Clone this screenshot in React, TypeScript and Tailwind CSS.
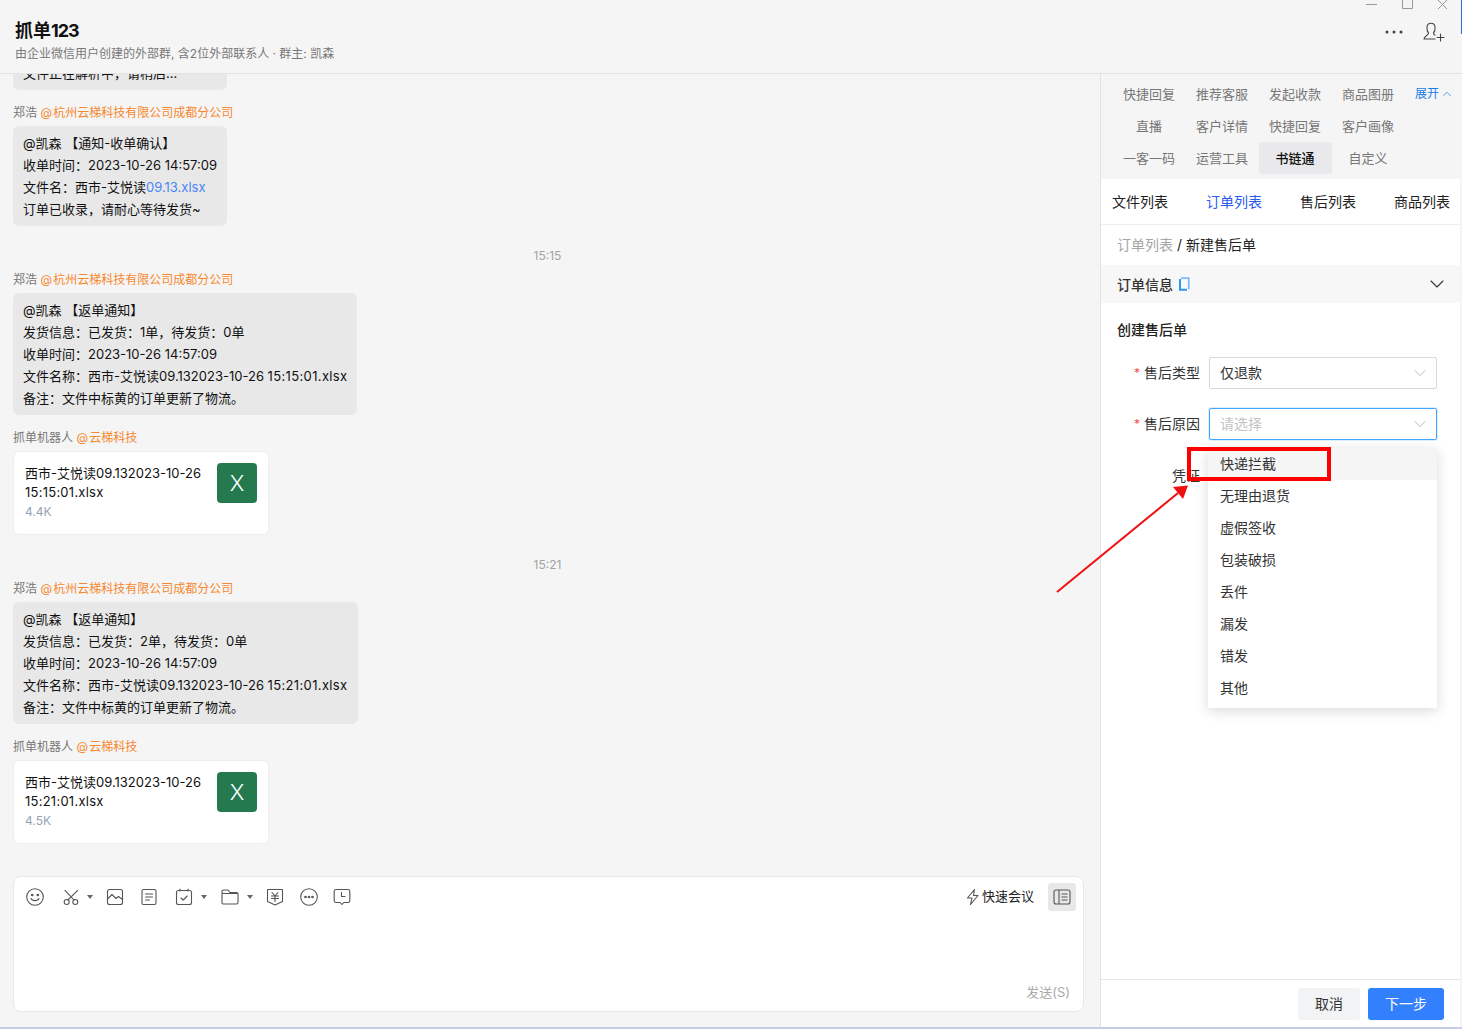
import React from 'react';
import { ChevronDown, ChevronUp } from 'lucide-react';

const tabs = [
  ['快捷回复', '推荐客服', '发起收款', '商品图册'],
  ['直播', '客户详情', '快捷回复', '客户画像'],
  ['一客一码', '运营工具', '书链通', '自定义'],
];
const reasons = ['快递拦截', '无理由退货', '虚假签收', '包装破损', '丢件', '漏发', '错发', '其他'];

function Sender({ name, org }: { name: string; org: string }) {
  return (
    <div className="h-[18px] pt-[1px] text-[12px] leading-[18px] text-[#777]">
      {name} <span className="text-[#f5882f]"><span className="mr-[-2px]">@</span> {org}</span>
    </div>
  );
}

function Bubble({ lines, className = 'w-fit' }: { lines: React.ReactNode[]; className?: string }) {
  return (
    <div className={`rounded-md bg-[#e8e8e8] px-[10px] py-[6px] text-[13px] leading-[22px] text-[#111] ${className}`}>
      {lines.map((l, i) => (
        <div key={i} className="whitespace-nowrap">{l}</div>
      ))}
    </div>
  );
}

function FileCard({ time, size }: { time: string; size: string }) {
  return (
    <div className="mt-[5px] flex h-[84px] w-[256px] justify-between rounded-md border border-[#eeeeee] bg-white pl-[11px] pr-[11px] pt-[11px]">
      <div className="w-[186px] pt-[1px] text-[13px] leading-[19px] text-[#111]">
        <div>西市-艾悦读09.132023-10-26</div>
        <div className="tracking-[0.25px]">{time}.xlsx</div>
        <div className="text-[12px] text-[#94a3b3]">{size}</div>
      </div>
      <div className="flex h-[40px] w-[40px] items-center justify-center rounded-sm bg-[#24794f] text-[22px] font-light text-white">X</div>
    </div>
  );
}

function Time({ t }: { t: string }) {
  return <div className="mb-[6px] mt-[20px] h-[18px] pr-[2px] pt-[1px] text-center text-[12px] leading-[18px] text-[#a3a3a3]">{t}</div>;
}

function Receipt({ sent, time }: { sent: string; time: string }) {
  return (
    <Bubble
      className="mt-[5px] w-fit"
      lines={[
        '@凯森 【返单通知】',
        `发货信息：已发货：${sent}单，待发货：0单`,
        '收单时间：2023-10-26 14:57:09',
        <>文件名称：西市-艾悦读09.132023-10-26 <span className="tracking-[0.35px]">{time}.xlsx</span></>,
        '备注：文件中标黄的订单更新了物流。',
      ]}
    />
  );
}

function Caret({ className = 'ml-[7px]' }: { className?: string }) {
  return <span className={`h-0 w-0 border-x-[3px] border-t-[4px] border-x-transparent border-t-[#666] ${className}`} />;
}

function Ico({ children, w = 20 }: { children: React.ReactNode; w?: number }) {
  return (
    <svg width={w} height={20} viewBox="0 0 20 20" fill="none" stroke="#555" strokeWidth="1.1" strokeLinecap="round" strokeLinejoin="round">
      {children}
    </svg>
  );
}

function Toolbar() {
  return (
    <div className="flex items-center">
      <div className="ml-[11px]">
        <Ico>
          <circle cx="10" cy="10" r="8.3" />
          <circle cx="7.2" cy="8" r=".8" fill="#555" />
          <circle cx="12.8" cy="8" r=".8" fill="#555" />
          <path d="M6 11.5c1 2.8 7 2.8 8 0" />
        </Ico>
      </div>
      <div className="ml-[16px] flex items-center">
        <Ico>
          <circle cx="5.7" cy="15" r="2.5" />
          <circle cx="14.3" cy="15" r="2.5" />
          <path d="M16.700 3.300 7 13M4 3.300 13 13" />
        </Ico>
        <Caret className="ml-[6px]" />
      </div>
      <div className="ml-[12px]">
        <Ico>
          <rect x="2.5" y="2.5" width="15" height="15" rx="2" />
          <path d="M2.5 12 7 7.5l4 4 2.5-2 4 3" />
        </Ico>
      </div>
      <div className="ml-[14px]">
        <Ico>
          <rect x="3" y="2.5" width="14" height="15" rx="1.5" />
          <path d="M6.5 7h7M6.5 10h7M6.5 13h4" />
        </Ico>
      </div>
      <div className="ml-[15px] flex items-center">
        <Ico>
          <rect x="2.5" y="3.5" width="15" height="14" rx="2" />
          <path d="M6 2v2M14 2v2M7 11l2.2 2 4-4" />
        </Ico>
        <Caret />
      </div>
      <div className="ml-[13px] flex items-center">
        <Ico>
          <path d="M2 6V4.5C2 3.7 2.7 3 3.5 3H8l2 2.5h6.5c.8 0 1.500.7 1.500 1.500v8.500c0 .8-.7 1.500-1.500 1.500h-13C2.700 17 2 16.300 2 15.500V6.500h16" />
        </Ico>
        <Caret />
      </div>
      <div className="ml-[12px]">
        <Ico>
          <path d="M3 2.500h14c.3 0 .5.2.5.5v11.500L10 18l-7.500-3.500V3c0-.3.2-.5.500-.5z" />
          <path d="M7 5.500 10 9l3-3.500M6.500 9h7M6.500 11.500h7M10 9v5.500" />
        </Ico>
      </div>
      <div className="ml-[14px]">
        <Ico>
          <circle cx="10" cy="10" r="8.300" />
          <circle cx="6.500" cy="10" r=".8" fill="#555" />
          <circle cx="10" cy="10" r=".8" fill="#555" />
          <circle cx="13.500" cy="10" r=".8" fill="#555" />
        </Ico>
      </div>
      <div className="ml-[13px]">
        <Ico>
          <path d="M4 2.500h12c1 0 1.800.8 1.800 1.800v9.400c0 1-.8 1.800-1.800 1.800h-4.200L10 17.500l-1.800-2H4c-1 0-1.800-.8-1.800-1.800V4.300c0-1 .8-1.800 1.800-1.800z" />
          <path d="M9.500 5.500V9.500h3.500" />
        </Ico>
      </div>
    </div>
  );
}

function Field({ label, value, focused }: { label: string; value: string; focused?: boolean }) {
  return (
    <div className="flex items-center">
      <div className="flex w-[83px] items-center justify-end pb-[1px] text-[14px] text-[#333]">
        <span className="mr-[4px] text-[12px] text-[#f5484d]">*</span>
        {label}
      </div>
      <div
        className={`ml-[9px] flex h-[32px] w-[228px] items-center justify-between rounded-[2px] border pb-[1px] pl-[10px] text-[14px] ${
          focused ? 'border-[#40a9ff] text-[#c4c4c4] shadow-[0_0_0_1px_rgba(24,144,255,0.15)]' : 'border-[#d9d9d9] text-[#333]'
        }`}
      >
        {value}
        <ChevronDown size={20} strokeWidth={0.8} className="mr-[6px] text-[#999]" />
      </div>
    </div>
  );
}

export default function App() {
  return (
    <div
      className="relative flex h-[1029px] w-[1462px] flex-col overflow-hidden bg-[#f5f5f5]"
      style={{ fontFamily: 'Inter, "Noto Sans CJK SC", sans-serif' }}
    >
      <div className="flex h-[74px] shrink-0 justify-between border-b border-[#e3e3e3] pl-[15px]">
        <div>
          <div className="mt-[19px] text-[18px] font-bold leading-[24px] text-[#111]">抓单<span className="tracking-[-1px]">123</span></div>
          <div className="mt-[2px] text-[12px] leading-[18px] text-[#777]">由企业微信用户创建的外部群, 含2位外部联系人 · 群主: 凯森</div>
        </div>
        <div className="flex w-[100px] flex-col">
          <svg width="86" height="10" viewBox="0 0 86 10" fill="none" stroke="#999" strokeWidth="1" className="mr-[14px] self-end">
            <path d="M4 4.500h11M40.500 0v8.500h10V0M76 0l9 9M85 0l-9 9" />
          </svg>
          <div className="mt-[12px] flex items-center justify-end gap-[20px] pr-[17px]">
            <svg width="18" height="4" viewBox="0 0 18 4" fill="#444">
              <circle cx="2" cy="2" r="1.500" />
              <circle cx="9" cy="2" r="1.500" />
              <circle cx="16" cy="2" r="1.500" />
            </svg>
            <svg width="22" height="20" viewBox="0 0 22 20" fill="none" stroke="#444" strokeWidth="1.100" strokeLinecap="round">
              <path d="M1 17h11M1 17c0-3 4.500-3.500 4.500-6C4 9.500 3.800 7 4 5c.3-2.400 2-3.700 4-3.700s3.700 1.300 4 3.700c.2 2 0 4.500-1.500 6 0 1 .6 1.700 1.500 2.200M14 15.500h7M17.500 12v7" />
            </svg>
          </div>
        </div>
      </div>

      <div className="flex min-h-0 flex-1">
        <div className="flex w-[1100px] flex-col">
          <div className="min-h-0 flex-1 overflow-hidden pl-[13px] pr-[16px]">
            <Bubble className="mt-[-18px] w-[214px]" lines={['文件正在解析中，请稍后...']} />
            <div className="mt-[13px]">
              <Sender name="郑浩" org="杭州云梯科技有限公司成都分公司" />
            </div>
            <Bubble
              className="mt-[5px] w-fit"
              lines={[
                '@凯森 【通知-收单确认】',
                '收单时间：2023-10-26 14:57:09',
                <>文件名：西市-艾悦读<span className="text-[#4a86f7]">09.13.xlsx</span></>,
                '订单已收录，请耐心等待发货~',
              ]}
            />
            <Time t="15:15" />
            <Sender name="郑浩" org="杭州云梯科技有限公司成都分公司" />
            <Receipt sent="1" time="15:15:01" />
            <div className="mt-[13px]">
              <Sender name="抓单机器人" org="云梯科技" />
            </div>
            <FileCard time="15:15:01" size="4.4K" />
            <Time t="15:21" />
            <Sender name="郑浩" org="杭州云梯科技有限公司成都分公司" />
            <Receipt sent="2" time="15:21:01" />
            <div className="mt-[13px]">
              <Sender name="抓单机器人" org="云梯科技" />
            </div>
            <FileCard time="15:21:01" size="4.5K" />
          </div>

          <div className="mb-[15px] ml-[13px] mr-[16px] flex h-[136px] shrink-0 flex-col justify-between rounded-lg border border-[#e8e8e8] bg-white pb-[10px] pr-[7px] pt-[6px]">
            <div className="flex items-center justify-between">
              <Toolbar />
              <div className="flex items-center">
                <svg width="16" height="18" viewBox="0 0 16 18" fill="none" stroke="#555" strokeWidth="1.100" strokeLinejoin="round">
                  <path d="M9.500 1.500 2.500 10H7l-1.500 6.500L13 7.500H8.500z" />
                </svg>
                <span className="ml-[1px] text-[13px] text-[#222]">快速会议</span>
                <div className="ml-[14px] flex h-[28px] w-[28px] items-center justify-center rounded-[3px] bg-[#e8e8e8]">
                  <svg width="18" height="16" viewBox="0 0 18 16" fill="none" stroke="#555" strokeWidth="1.100">
                    <rect x="1" y="1" width="16" height="14" rx="2" />
                    <path d="M6 1v14M8.500 5H14.500M8.500 8H14.500M8.500 11H14.500" />
                  </svg>
                </div>
              </div>
            </div>
            <div className="pr-[6px] text-right text-[13px] leading-[18px] text-[#aaa]">发送(S)</div>
          </div>
        </div>

        <div className="flex w-[360px] flex-col border-l border-[#e3e3e3] bg-white">
          <div className="h-[105px] shrink-0 bg-[#f5f5f5] pl-[12px] pt-[4px]">
            {tabs.map((row, r) => (
              <div key={r} className="flex">
                {row.map((t) => (
                  <div
                    key={t}
                    className={`flex h-[32px] w-[73px] items-center justify-center rounded-[3px] pr-[1px] pt-[1px] text-[13px] ${
                      t === '书链通' ? 'bg-[#e9e9eb] font-medium text-[#111]' : 'text-[#777]'
                    }`}
                  >
                    {t}
                  </div>
                ))}
                {r === 0 && (
                  <div className="ml-[10px] flex items-center text-[12px] text-[#1a7ee8]">
                    展开
                    <ChevronUp size={14} strokeWidth={1.200} className="ml-[1px]" />
                  </div>
                )}
              </div>
            ))}
          </div>
          <div className="flex h-[46px] shrink-0 items-center justify-between border-b border-[#eeeeee] pl-[11px] pr-[10px] text-[14px] text-[#222]">
            <span>文件列表</span>
            <span className="text-[#2a5bf0]">订单列表</span>
            <span>售后列表</span>
            <span>商品列表</span>
          </div>
          <div className="flex h-[40px] shrink-0 items-center rounded-b-md pb-[1px] pl-[16px] text-[14px] text-[#222]">
            <span className="text-[#a6a6a6]">订单列表</span>&nbsp;/ 新建售后单
          </div>
          <div className="flex h-[38px] shrink-0 items-center justify-between bg-[#f7f7f7] pl-[16px] pr-[11px] text-[14px] font-medium text-[#333]">
            <div className="flex items-center">
              订单信息
              <svg width="12" height="14" viewBox="0 0 12 14" fill="none" className="ml-[5px]">
                <path d="M3 1.200h7.800v11" stroke="#7dbcfa" strokeWidth="1.800" />
                <path d="M2 2v10.800h7" stroke="#2f95f5" strokeWidth="2" />
              </svg>
            </div>
            <ChevronDown size={24} strokeWidth={1.100} className="text-[#333]" />
          </div>
          <div className="min-h-0 flex-1 pl-[16px] pr-[23px]">
            <div className="mt-[17px] text-[14px] font-medium leading-[20px] text-[#222]">创建售后单</div>
            <div className="mt-[17px] flex flex-col gap-[19px]">
              <Field label="售后类型" value="仅退款" />
              <Field label="售后原因" value="请选择" focused />
              <div className="flex h-[32px] w-[83px] items-center justify-end pt-[1px] text-[14px] text-[#333]">凭证</div>
            </div>
          </div>
          <div className="flex h-[48px] shrink-0 items-start justify-end gap-[8px] border-t border-[#e8e8e8] pr-[16px] pt-[8px] text-[14px]">
            <div className="flex h-[32px] w-[62px] items-center justify-center rounded-[3px] bg-[#f2f3f5] pb-[1px] text-[#333]">取消</div>
            <div className="flex h-[32px] w-[76px] items-center justify-center rounded-[3px] bg-[#3380ff] pb-[1px] text-white">下一步</div>
          </div>
        </div>
      </div>
      <div className="h-[2px] shrink-0 bg-[#c5cfe0]" />

      {/* open select menu */}
      <div className="absolute left-[1208px] top-[448px] w-[229px] bg-white pb-[4px] text-[14px] text-[#333] shadow-[0_3px_12px_rgba(0,0,0,0.15)]">
        {reasons.map((r, i) => (
          <div key={r} className={`flex h-[32px] items-center pb-[1px] pl-[12px] ${i === 0 ? 'bg-[#f5f5f5]' : ''}`}>{r}</div>
        ))}
      </div>

      {/* red annotation */}
      <div className="absolute left-[1187px] top-[447px] h-[34px] w-[144px] border-[4px] border-[#ff0000]" />
      <svg className="absolute left-0 top-0" width="1462" height="1029" fill="none">
        <path d="M1057 592 1178 493" stroke="#f01010" strokeWidth="2" />
        <path d="M1188 485.500 1173 487 1183 499z" fill="#f01010" />
      </svg>

      <div className="absolute right-0 top-0 h-[34px] w-[1px] bg-[#2a6fd0]" />
    </div>
  );
}
